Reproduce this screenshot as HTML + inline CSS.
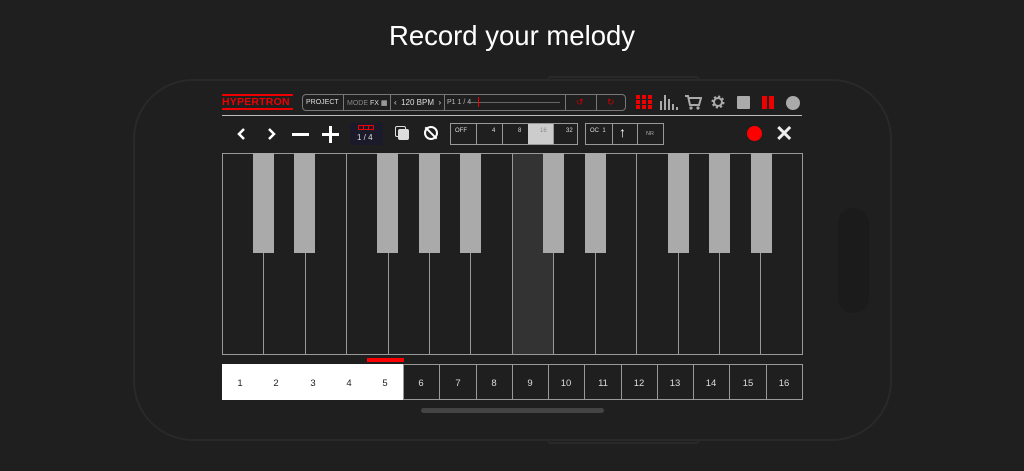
<!DOCTYPE html>
<html><head><style>
*{margin:0;padding:0;box-sizing:border-box}
body{width:1024px;height:471px;background:#1f1f1f;position:relative;overflow:hidden;font-family:"Liberation Sans",sans-serif;color:#ddd}
.a{position:absolute}
.t{font-size:7px;color:#ddd}
</style></head><body>
<div class="a" style="left:0;top:20px;width:1024px;text-align:center;font-size:27.5px;color:#fff">Record your melody</div>
<div class="a" style="left:133px;top:79px;width:759px;height:362px;border:2px solid #292929;border-radius:60px"></div>
<div class="a" style="left:547px;top:76px;width:153px;height:5px;border:2px solid #292929;border-bottom:none;border-radius:4px 4px 0 0"></div>
<div class="a" style="left:547px;top:439px;width:153px;height:5px;border:2px solid #292929;border-top:none;border-radius:0 0 4px 4px"></div>
<div class="a" style="left:838px;top:208px;width:31px;height:105px;background:#1b1b1b;border-radius:15px"></div>
<div class="a" style="left:421px;top:408px;width:183px;height:5px;background:#444;border-radius:3px"></div>

<!-- logo -->
<div class="a" style="left:222px;top:94px;width:71px;height:2px;background:#e00"></div>
<div class="a" style="left:222px;top:96px;font-size:10.5px;font-weight:bold;color:#e00;letter-spacing:0.2px">HYPERTRON</div>
<div class="a" style="left:222px;top:108px;width:71px;height:2px;background:#e00"></div>
<!-- top bar -->
<div class="a" style="left:302px;top:94px;width:324px;height:17px;border:1px solid #777;border-radius:4px"></div>
<div class="a t" style="left:306px;top:99px">PROJECT</div>
<div class="a" style="left:343px;top:95px;width:1px;height:15px;background:#777"></div>
<div class="a t" style="left:347px;top:99px;color:#888">MODE <span style="color:#ddd">FX ▦</span></div>
<div class="a" style="left:390px;top:95px;width:1px;height:15px;background:#777"></div>
<div class="a t" style="left:394px;top:98px;font-size:8px">‹ &nbsp;120 BPM &nbsp;›</div>
<div class="a" style="left:444px;top:95px;width:1px;height:15px;background:#777"></div>
<div class="a t" style="left:447px;top:99px;color:#bbb">P1 1 / 4</div>
<div class="a" style="left:471px;top:102px;width:89px;height:1px;background:#666"></div>
<div class="a" style="left:478px;top:97px;width:1px;height:10px;background:#e00"></div>
<div class="a" style="left:565px;top:95px;width:1px;height:15px;background:#777"></div>
<div class="a" style="left:596px;top:95px;width:1px;height:15px;background:#777"></div>
<div class="a" style="left:576px;top:97px;font-size:9px;color:#c00">↺</div>
<div class="a" style="left:607px;top:97px;font-size:9px;color:#c00">↻</div>
<!-- right icons -->
<svg class="a" style="left:636px;top:95px" width="16" height="14"><g fill="#e00"><rect x="0" y="0" width="4" height="4"/><rect x="6" y="0" width="4" height="4"/><rect x="12" y="0" width="4" height="4"/><rect x="0" y="5" width="4" height="4"/><rect x="6" y="5" width="4" height="4"/><rect x="12" y="5" width="4" height="4"/><rect x="0" y="10" width="4" height="4"/><rect x="6" y="10" width="4" height="4"/><rect x="12" y="10" width="4" height="4"/></g></svg>
<svg class="a" style="left:660px;top:95px" width="18" height="15"><g fill="#aaa"><rect x="0" y="6" width="2" height="9"/><rect x="4" y="0" width="2" height="15"/><rect x="8" y="4" width="2" height="11"/><rect x="12" y="9" width="2" height="6"/><rect x="16" y="12" width="2" height="3"/></g></svg>
<svg class="a" style="left:685px;top:95px" width="17" height="15"><path d="M0 1h3l2 9h9l2-7H4" stroke="#aaa" stroke-width="2" fill="none"/><circle cx="6" cy="13" r="1.6" fill="#aaa"/><circle cx="13" cy="13" r="1.6" fill="#aaa"/></svg>
<svg class="a" style="left:711px;top:95px" width="14" height="14"><circle cx="7" cy="7" r="5" fill="none" stroke="#aaa" stroke-width="3" stroke-dasharray="2 1.9"/><circle cx="7" cy="7" r="4" fill="none" stroke="#aaa" stroke-width="2"/></svg>
<div class="a" style="left:737px;top:96px;width:13px;height:13px;background:#aaa;border-radius:1px"></div>
<div class="a" style="left:762px;top:96px;width:5px;height:13px;background:#e00"></div>
<div class="a" style="left:769px;top:96px;width:5px;height:13px;background:#e00"></div>
<div class="a" style="left:786px;top:96px;width:14px;height:14px;background:#aaa;border-radius:50%"></div>
<div class="a" style="left:222px;top:115px;width:580px;height:1px;background:#bbb"></div>
<!-- second row -->
<svg class="a" style="left:236px;top:128px" width="40" height="12"><path d="M8 1L3 6l5 5M33 1l5 5-5 5" stroke="#fff" stroke-width="2.5" fill="none"/></svg>
<div class="a" style="left:292px;top:133px;width:17px;height:3px;background:#fff"></div>
<div class="a" style="left:322px;top:133px;width:17px;height:3px;background:#fff"></div>
<div class="a" style="left:329px;top:126px;width:3px;height:17px;background:#fff"></div>
<div class="a" style="left:350px;top:123px;width:33px;height:22px;background:#1a1a2a"></div>
<div class="a" style="left:358px;top:125px;width:16px;height:5px;border:1px solid #e00"></div>
<div class="a" style="left:363px;top:125px;width:1px;height:5px;background:#e00"></div><div class="a" style="left:368px;top:125px;width:1px;height:5px;background:#e00"></div>
<div class="a" style="left:357px;top:133px;font-size:8px;color:#ddd">1 / 4</div>
<div class="a" style="left:395px;top:126px;width:11px;height:11px;border:1px solid #ddd;border-radius:2px"></div>
<div class="a" style="left:398px;top:129px;width:11px;height:11px;background:#ddd;border-radius:2px"></div>
<div class="a" style="left:424px;top:126px;width:14px;height:14px;border:2.5px solid #fff;border-radius:50%"></div>
<div class="a" style="left:430px;top:125px;width:2px;height:16px;background:#fff;transform:rotate(-45deg)"></div>
<div class="a" style="left:450px;top:123px;width:128px;height:22px;border:1px solid #999"></div>
<div class="a" style="left:528px;top:124px;width:25px;height:20px;background:#ccc"></div>
<div class="a" style="left:476px;top:124px;width:1px;height:20px;background:#999"></div>
<div class="a" style="left:502px;top:124px;width:1px;height:20px;background:#999"></div>
<div class="a" style="left:553px;top:124px;width:1px;height:20px;background:#999"></div>
<div class="a t" style="left:455px;top:128px;font-size:6px">OFF</div>
<div class="a t" style="left:492px;top:128px;font-size:6px">4</div>
<div class="a t" style="left:518px;top:128px;font-size:6px">8</div>
<div class="a t" style="left:540px;top:128px;font-size:6px;color:#888">16</div>
<div class="a t" style="left:566px;top:128px;font-size:6px">32</div>
<div class="a" style="left:585px;top:123px;width:79px;height:22px;border:1px solid #999"></div>
<div class="a" style="left:612px;top:124px;width:1px;height:20px;background:#999"></div>
<div class="a" style="left:637px;top:124px;width:1px;height:20px;background:#999"></div>
<div class="a t" style="left:590px;top:128px;font-size:6px">OC &nbsp;1</div>
<div class="a" style="left:619px;top:124px;font-size:14px;color:#fff;font-weight:bold">↑</div>
<div class="a t" style="left:646px;top:131px;font-size:5.5px;color:#aaa">NR</div>
<div class="a" style="left:747px;top:126px;width:15px;height:15px;background:#f00;border-radius:50%"></div>
<div class="a" style="left:775px;top:124px;font-size:22px;font-weight:bold;color:#eee;line-height:20px">✕</div>
<!-- piano -->
<svg class="a" style="left:222px;top:153px" width="581" height="202">
<rect x="0.5" y="0.5" width="580" height="201" fill="#1f1f1f" stroke="#999"/>
<rect x="290.5" y="1" width="41" height="200" fill="#333"/>
<g stroke="#999"><line x1="41.5" y1="0" x2="41.5" y2="202"/><line x1="83.5" y1="0" x2="83.5" y2="202"/><line x1="124.5" y1="0" x2="124.5" y2="202"/><line x1="166.5" y1="0" x2="166.5" y2="202"/><line x1="207.5" y1="0" x2="207.5" y2="202"/><line x1="248.5" y1="0" x2="248.5" y2="202"/><line x1="290.5" y1="0" x2="290.5" y2="202"/><line x1="331.5" y1="0" x2="331.5" y2="202"/><line x1="373.5" y1="0" x2="373.5" y2="202"/><line x1="414.5" y1="0" x2="414.5" y2="202"/><line x1="456.5" y1="0" x2="456.5" y2="202"/><line x1="497.5" y1="0" x2="497.5" y2="202"/><line x1="538.5" y1="0" x2="538.5" y2="202"/></g>
<g fill="#aaa"><rect x="31" y="0" width="21" height="100"/><rect x="72" y="0" width="21" height="100"/><rect x="155" y="0" width="21" height="100"/><rect x="197" y="0" width="21" height="100"/><rect x="238" y="0" width="21" height="100"/><rect x="321" y="0" width="21" height="100"/><rect x="363" y="0" width="21" height="100"/><rect x="446" y="0" width="21" height="100"/><rect x="487" y="0" width="21" height="100"/><rect x="529" y="0" width="21" height="100"/></g>
</svg>
<div class="a" style="left:367px;top:358px;width:37px;height:4px;background:#f00"></div>
<!-- steps -->
<svg class="a" style="left:222px;top:364px" width="581" height="36" font-family="Liberation Sans" font-size="9.5" text-anchor="middle">
<rect x="0" y="0" width="181" height="36" fill="#fff"/>
<rect x="181.5" y="0.5" width="399" height="35" fill="#1f1f1f" stroke="#999"/>
<g stroke="#999"><line x1="217.5" y1="0" x2="217.5" y2="36"/><line x1="254.5" y1="0" x2="254.5" y2="36"/><line x1="290.5" y1="0" x2="290.5" y2="36"/><line x1="326.5" y1="0" x2="326.5" y2="36"/><line x1="362.5" y1="0" x2="362.5" y2="36"/><line x1="399.5" y1="0" x2="399.5" y2="36"/><line x1="435.5" y1="0" x2="435.5" y2="36"/><line x1="471.5" y1="0" x2="471.5" y2="36"/><line x1="507.5" y1="0" x2="507.5" y2="36"/><line x1="544.5" y1="0" x2="544.5" y2="36"/></g>
<g fill="#222"><text x="18" y="22">1</text><text x="54" y="22">2</text><text x="91" y="22">3</text><text x="127" y="22">4</text><text x="163" y="22">5</text></g>
<g fill="#ddd"><text x="199" y="22">6</text><text x="236" y="22">7</text><text x="272" y="22">8</text><text x="308" y="22">9</text><text x="344" y="22">10</text><text x="381" y="22">11</text><text x="417" y="22">12</text><text x="453" y="22">13</text><text x="489" y="22">14</text><text x="526" y="22">15</text><text x="562" y="22">16</text></g>
</svg>
</body></html>
